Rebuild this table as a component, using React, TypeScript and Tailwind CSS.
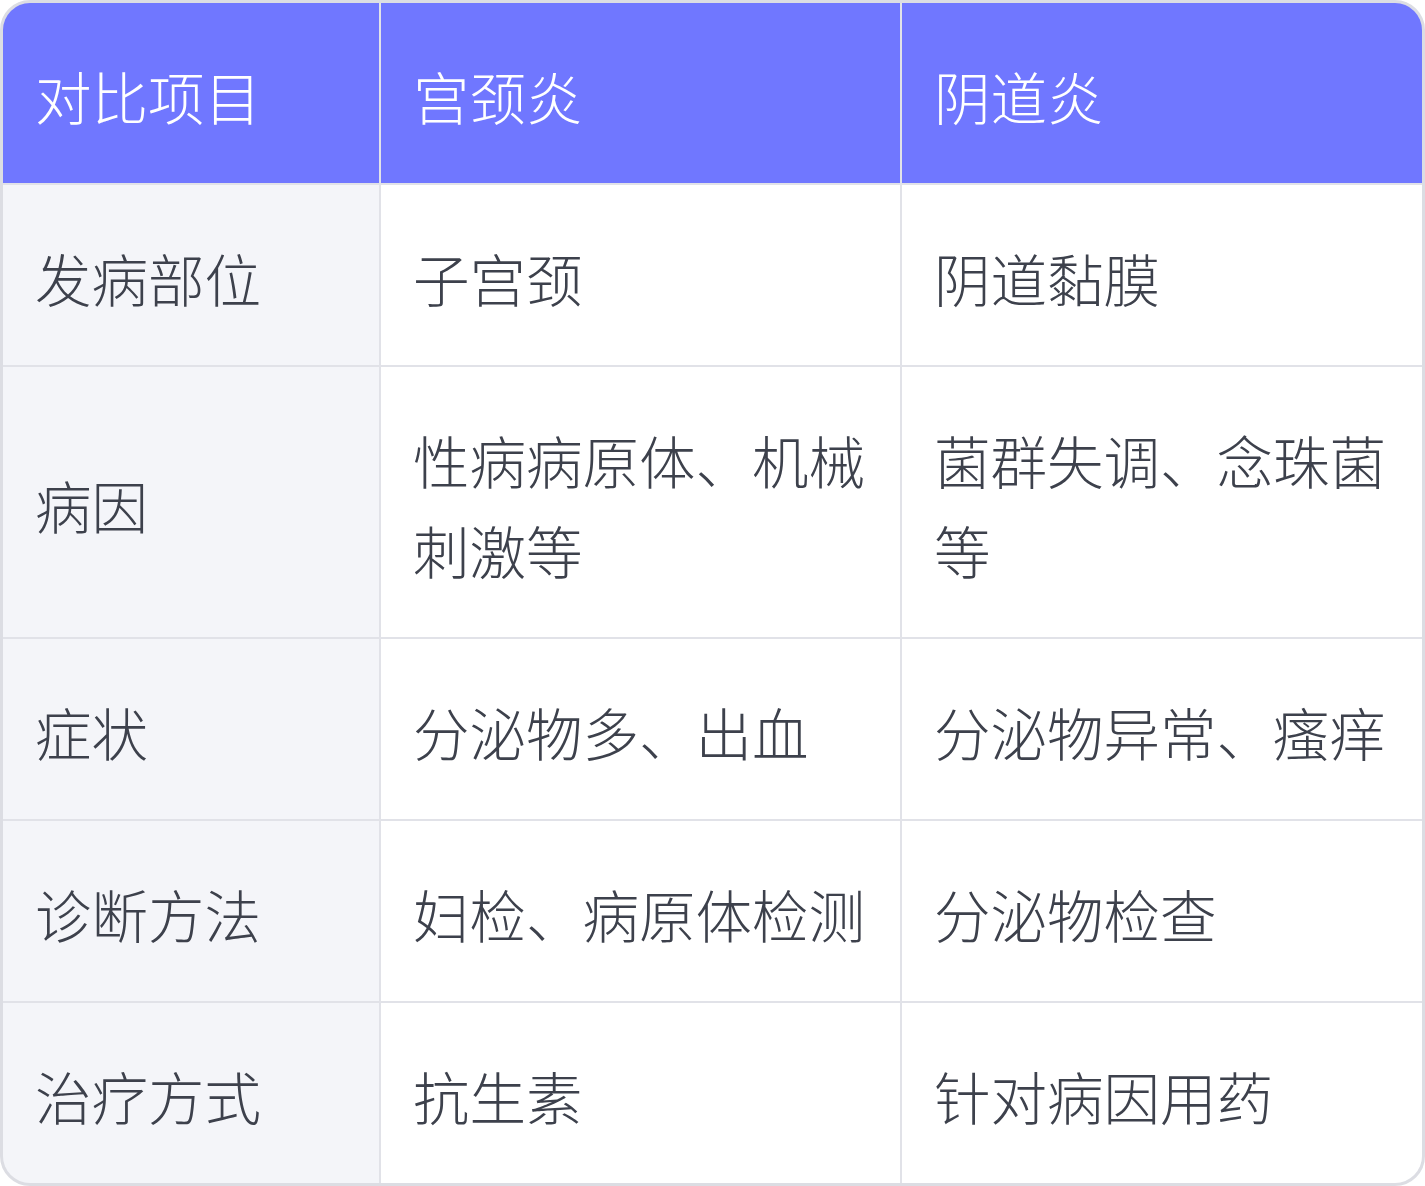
import React from "react";

const rows: [string, string, string][] = [
  ["发病部位", "子宫颈", "阴道黏膜"],
  ["病因", "性病病原体、机械刺激等", "菌群失调、念珠菌等"],
  ["症状", "分泌物多、出血", "分泌物异常、瘙痒"],
  ["诊断方法", "妇检、病原体检测", "分泌物检查"],
  ["治疗方式", "抗生素", "针对病因用药"],
];

export default function App() {
  return (
    <div
      className="w-[1425px] h-[1186px] bg-white font-light"
      style={{ fontFamily: '"Noto Sans CJK SC", "Noto Sans", sans-serif' }}
    >
      <div className="w-full h-full border-[3px] border-[#dcdde3] rounded-[30px] overflow-hidden bg-[#e1e2e8]">
        <div className="grid grid-cols-[376px_519px_1fr] gap-[2px] text-[56.5px] leading-[90px] text-[#3d414c]">
          {["对比项目", "宫颈炎", "阴道炎"].map((h) => (
            <div key={h} className="bg-[#7077ff] text-white px-[32px] pt-[47px] pb-[43px]">
              {h}
            </div>
          ))}
          {rows.map((r) => (
            <React.Fragment key={r[0]}>
              <div className="bg-[#f4f5f9] px-[32px] pt-[47px] pb-[43px] flex items-center">{r[0]}</div>
              <div className="bg-white px-[32px] pt-[47px] pb-[43px]">{r[1]}</div>
              <div className="bg-white px-[32px] pt-[47px] pb-[43px]">{r[2]}</div>
            </React.Fragment>
          ))}
        </div>
      </div>
    </div>
  );
}
